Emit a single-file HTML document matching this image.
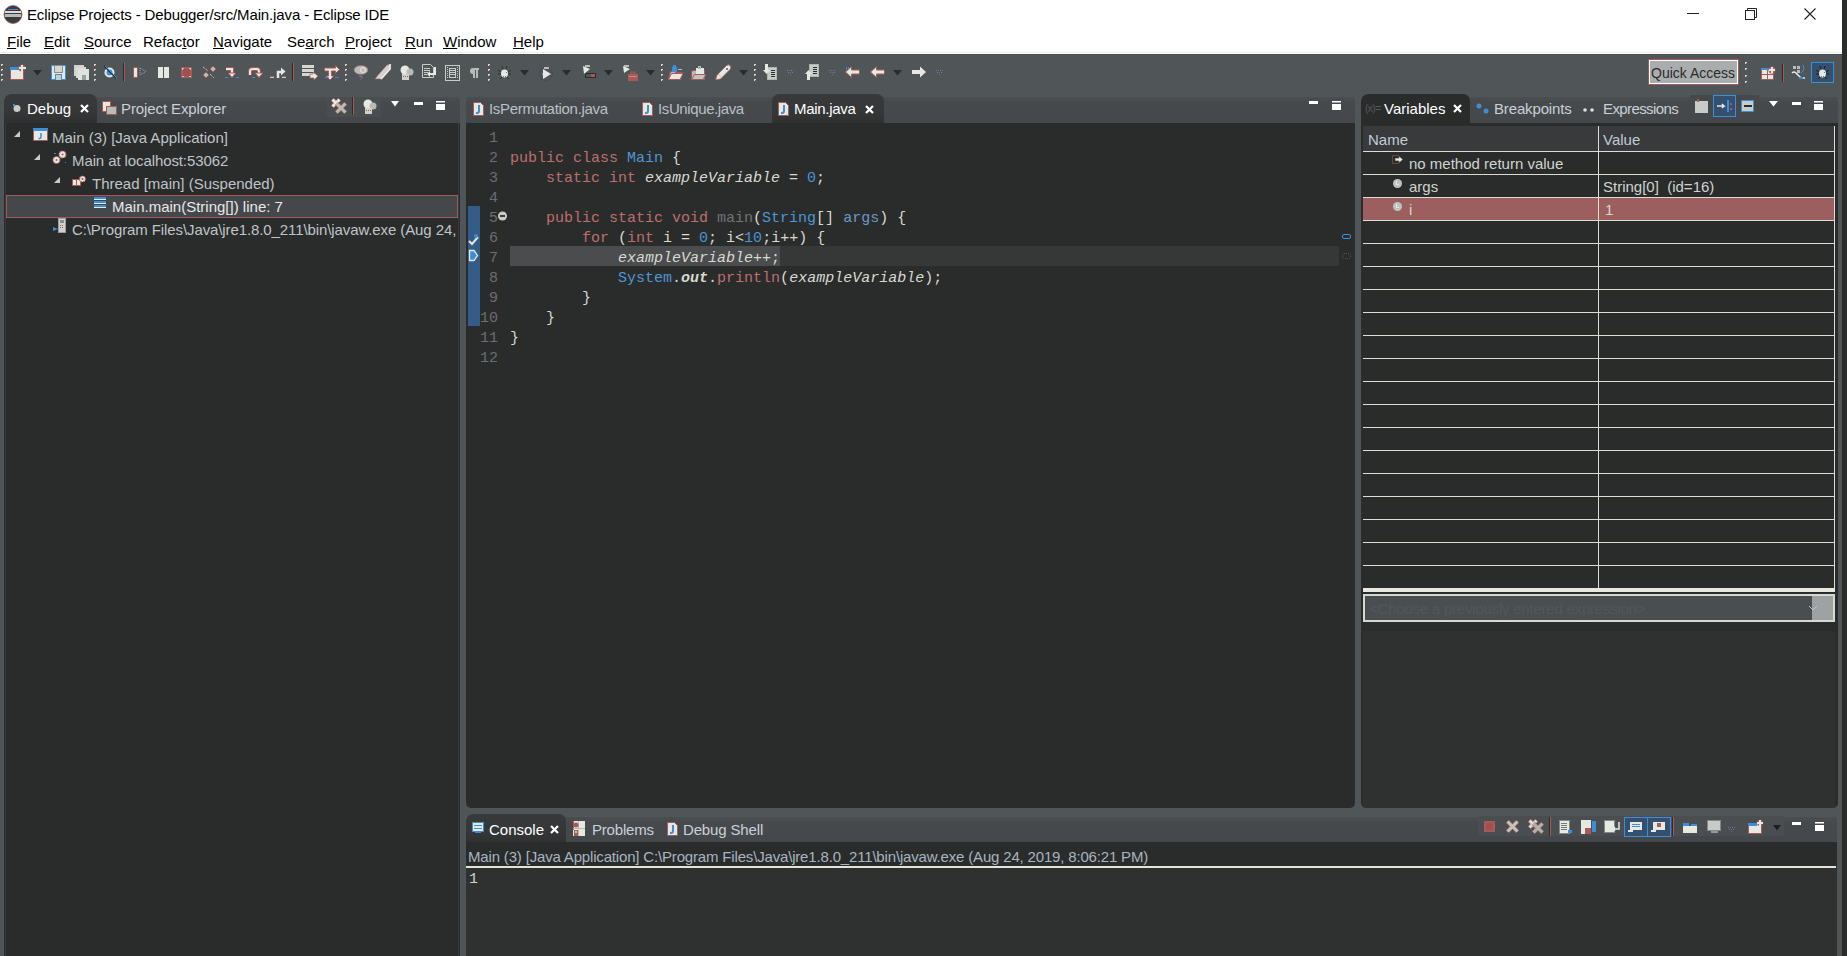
<!DOCTYPE html>
<html><head><meta charset="utf-8">
<style>
*{box-sizing:border-box}
html,body{margin:0;padding:0}
body{width:1847px;height:956px;position:relative;overflow:hidden;background:#2a2c2c;font-family:"Liberation Sans",sans-serif}
.a{position:absolute}
.t{position:absolute;white-space:pre;font-family:"Liberation Sans",sans-serif;font-size:15px;line-height:17px}
.m{position:absolute;white-space:pre;font-family:"Liberation Mono",monospace;font-size:15px;line-height:20px}
.u{text-decoration:underline;text-underline-offset:1px}
.stack{position:absolute;background:transparent;border-radius:7px 7px 0 0;overflow:hidden}
.tabbar{position:absolute;left:0;top:3px;right:0;height:26px;background:linear-gradient(#4b4e51 0,#474a4d 20%,#46494c 60%,#45484b 100%)}
.seltab{position:absolute;top:0;height:29px;border-radius:7px 7px 0 0;background:linear-gradient(#37393a,#353738 55%,#2f3131)}
.tree{color:#bfc4c8}
.kw{color:#be6e6e}
.cl{color:#4d97d5}
.nu{color:#4d92d0}
.it{font-style:italic}
svg{position:absolute;left:0;top:0}
</style></head><body>
<div class="a" style="left:0;top:0;width:1842px;height:956px;background:#505557"></div>
<div class="a" style="left:0;top:0;width:1842px;height:54px;background:#fff"></div>
<div class="a" style="left:0;top:52px;width:1842px;height:1px;background:#ebebe7"></div>
<div class="a" style="left:0;top:54px;width:1842px;height:1px;background:#484c4e"></div>

<div class="t" style="left:27px;top:6px;color:#000;letter-spacing:-0.13px">Eclipse Projects - Debugger/src/Main.java - Eclipse IDE</div>
<div class="t" style="left:7px;top:33px;color:#000"><span class="u">F</span>ile</div>
<div class="t" style="left:44px;top:33px;color:#000"><span class="u">E</span>dit</div>
<div class="t" style="left:84px;top:33px;color:#000"><span class="u">S</span>ource</div>
<div class="t" style="left:143px;top:33px;color:#000">Refac<span class="u">t</span>or</div>
<div class="t" style="left:213px;top:33px;color:#000"><span class="u">N</span>avigate</div>
<div class="t" style="left:287px;top:33px;color:#000">Se<span class="u">a</span>rch</div>
<div class="t" style="left:345px;top:33px;color:#000"><span class="u">P</span>roject</div>
<div class="t" style="left:405px;top:33px;color:#000"><span class="u">R</span>un</div>
<div class="t" style="left:443px;top:33px;color:#000"><span class="u">W</span>indow</div>
<div class="t" style="left:513px;top:33px;color:#000"><span class="u">H</span>elp</div>
<div class="a" style="left:1648px;top:59px;width:91px;height:26px;border:1px solid #a05a5a;background:#fff;padding:1px"><div style="width:100%;height:100%;background:#aaadae"></div></div>
<div class="t" style="left:1651px;top:65px;color:#2a2a2a;font-size:14px">Quick Access</div>
<div class="stack" style="left:4px;top:94px;width:456px;height:862px">
<div class="tabbar"></div><div class="seltab" style="left:0;width:93px"></div>
<div class="a" style="left:323px;top:3px;width:54px;height:20px;background:#4a4e50"></div>
<div class="a" style="left:0;top:29px;width:456px;height:833px;background:#2a2c2c"></div>
<div class="t" style="left:23px;top:6px;color:#fff">Debug</div>
<div class="t" style="left:117px;top:6px;color:#c8d0d8;letter-spacing:-0.1px">Project Explorer</div>
<div class="a" style="left:1px;top:29px;width:1px;height:833px;background:#383a3c"></div><div class="a" style="left:454px;top:29px;width:1px;height:833px;background:#383a3c"></div>
<div class="a" style="left:2px;top:101px;width:452px;height:23px;background:#45484b;border:1px solid #a05a5a"></div>
<div class="t tree" style="left:48px;top:35px">Main (3) [Java Application]</div>
<div class="t tree" style="left:68px;top:58px;letter-spacing:-0.1px">Main at localhost:53062</div>
<div class="t tree" style="left:88px;top:81px">Thread [main] (Suspended)</div>
<div class="t" style="left:108px;top:104px;color:#e8e8e8">Main.main(String[]) line: 7</div>
<div class="t tree" style="left:68px;top:127px;letter-spacing:-0.1px">C:\Program Files\Java\jre1.8.0_211\bin\javaw.exe (Aug 24, 2019, 8:06:21 PM)</div>
</div>
<div class="stack" style="left:466px;top:94px;width:889px;height:714px;border-radius:7px 7px 5px 5px">
<div class="tabbar"></div><div class="seltab" style="left:306px;width:112px"></div>
<div class="a" style="left:0;top:29px;width:889px;height:685px;background:#2a2c2c"></div>
<div class="t" style="left:23px;top:6px;color:#b8c0c8;letter-spacing:-0.3px">IsPermutation.java</div>
<div class="t" style="left:192px;top:6px;color:#b8c0c8;letter-spacing:-0.39px">IsUnique.java</div>
<div class="t" style="left:328px;top:6px;color:#fff;letter-spacing:-0.3px">Main.java</div>
<div class="a" style="left:2px;top:112px;width:12px;height:120px;background:#335d88"></div>
<div class="a" style="left:314px;top:152px;width:559px;height:20px;background:#363838"></div>
<div class="a" style="left:44px;top:152px;width:270px;height:20px;background:#4a4c4e"></div>
</div>
<div class="m" style="left:462px;top:129px;width:36px;text-align:right;color:#6a6e71">1
2
3
4
5
6
7
8
9
10
11
12</div>
<div class="m" style="left:510px;top:129px;color:#d9d9d0">
<span class="kw">public class</span> <span class="cl">Main</span> {
    <span class="kw">static int</span> <span class="it">exampleVariable</span> = <span class="nu">0</span>;

    <span class="kw">public static void</span> <span style="color:#6e7274">main</span>(<span class="cl">String</span>[] <span style="color:#6c98c8">args</span>) {
        <span class="kw">for</span> (<span class="kw">int</span> i = <span class="nu">0</span>; i&lt;<span class="nu">10</span>;i++) {
            <span class="it">exampleVariable</span>++;
            <span class="cl">System</span>.<b><i>out</i></b>.<span class="kw">println</span>(<span class="it">exampleVariable</span>);
        }
    }
}
</div>
<div class="stack" style="left:1361px;top:94px;width:477px;height:714px;border-radius:7px 7px 5px 5px">
<div class="tabbar"></div><div class="seltab" style="left:0;width:109px;background:#2a2c2c"></div>
<div class="a" style="left:329px;top:1px;width:69px;height:22px;background:#45494b"></div>
<div class="a" style="left:352px;top:1px;width:23px;height:22px;background:#34506e;border:1px solid #3d8ed8"></div>
<div class="a" style="left:0;top:29px;width:477px;height:685px;background:#2a2c2c"></div>
<div class="t" style="left:23px;top:6px;color:#fff">Variables</div>
<div class="t" style="left:133px;top:6px;color:#c8d0d8;letter-spacing:-0.15px">Breakpoints</div>
<div class="t" style="left:242px;top:6px;color:#c8d0d8;letter-spacing:-0.6px">Expressions</div>
<div class="a" style="left:2px;top:32px;width:472px;height:25px;background:#383a3b"></div>
<div class="t" style="left:7px;top:37px;color:#c0ccd8">Name</div>
<div class="t" style="left:242px;top:37px;color:#c0ccd8">Value</div>
<div class="a" style="left:2px;top:104px;width:472px;height:23px;background:#9c5e5e"></div>
<div class="a" style="left:2px;top:57px;width:472px;height:1px;background:#dcdcd4"></div>
<div class="a" style="left:2px;top:80px;width:472px;height:1px;background:#dcdcd4"></div>
<div class="a" style="left:2px;top:103px;width:472px;height:1px;background:#dcdcd4"></div>
<div class="a" style="left:2px;top:126px;width:472px;height:1px;background:#dcdcd4"></div>
<div class="a" style="left:2px;top:149px;width:472px;height:1px;background:#dcdcd4"></div>
<div class="a" style="left:2px;top:172px;width:472px;height:1px;background:#dcdcd4"></div>
<div class="a" style="left:2px;top:195px;width:472px;height:1px;background:#dcdcd4"></div>
<div class="a" style="left:2px;top:218px;width:472px;height:1px;background:#dcdcd4"></div>
<div class="a" style="left:2px;top:241px;width:472px;height:1px;background:#dcdcd4"></div>
<div class="a" style="left:2px;top:264px;width:472px;height:1px;background:#dcdcd4"></div>
<div class="a" style="left:2px;top:287px;width:472px;height:1px;background:#dcdcd4"></div>
<div class="a" style="left:2px;top:310px;width:472px;height:1px;background:#dcdcd4"></div>
<div class="a" style="left:2px;top:333px;width:472px;height:1px;background:#dcdcd4"></div>
<div class="a" style="left:2px;top:356px;width:472px;height:1px;background:#dcdcd4"></div>
<div class="a" style="left:2px;top:379px;width:472px;height:1px;background:#dcdcd4"></div>
<div class="a" style="left:2px;top:402px;width:472px;height:1px;background:#dcdcd4"></div>
<div class="a" style="left:2px;top:425px;width:472px;height:1px;background:#dcdcd4"></div>
<div class="a" style="left:2px;top:448px;width:472px;height:1px;background:#dcdcd4"></div>
<div class="a" style="left:2px;top:471px;width:472px;height:1px;background:#dcdcd4"></div>
<div class="a" style="left:237px;top:32px;width:1px;height:462px;background:#dcdcd4"></div>
<div class="a" style="left:473px;top:32px;width:1px;height:462px;background:#dcdcd4"></div>
<div class="a" style="left:2px;top:494px;width:472px;height:4px;background:#e8e8e0"></div>
<div class="t" style="left:48px;top:61px;color:#d0d4d0">no method return value</div>
<div class="t" style="left:48px;top:84px;color:#d0d4d0">args</div>
<div class="t" style="left:242px;top:84px;color:#d0d4d0">String[0]  (id=16)</div>
<div class="t" style="left:48px;top:107px;color:#d8d8d0">i</div>
<div class="t" style="left:244px;top:107px;color:#d8d8d0">1</div>
<div class="a" style="left:2px;top:500px;width:472px;height:28px;background:#4b4e50;border:2px solid #d8d8d0"></div>
<div class="a" style="left:451px;top:502px;width:21px;height:24px;background:#9ea2a2"></div>
<div class="t" style="left:8px;top:506px;color:#53575a;letter-spacing:-0.22px">&lt;Choose a previously entered expression&gt;</div>
<div class="a" style="left:2px;top:537px;width:472px;height:177px;background:#2f3131"></div>
</div>
<div class="stack" style="left:466px;top:814px;width:1371px;height:142px">
<div class="tabbar"></div><div class="seltab" style="left:0;width:100px"></div>
<div class="a" style="left:1012px;top:2px;width:306px;height:20px;background:#4a4e50"></div>
<div class="a" style="left:0;top:28px;width:1371px;height:114px;background:#2a2c2c"></div>
<div class="a" style="left:0;top:53px;width:1371px;height:89px;background:#2f3131"></div>
<div class="a" style="left:0;top:52px;width:1370px;height:2px;background:#e4e4dc"></div>
<div class="t" style="left:23px;top:7px;color:#fff">Console</div>
<div class="t" style="left:126px;top:7px;color:#c8d0d8;letter-spacing:-0.2px">Problems</div>
<div class="t" style="left:217px;top:7px;color:#c8d0d8;letter-spacing:-0.15px">Debug Shell</div>
<div class="t" style="left:2px;top:34px;color:#a8b4c0;letter-spacing:-0.17px">Main (3) [Java Application] C:\Program Files\Java\jre1.8.0_211\bin\javaw.exe (Aug 24, 2019, 8:06:21 PM)</div>
<div class="m" style="left:4px;top:858px;color:#d0d4d0;position:absolute"></div>
</div>
<div class="m" style="left:469px;top:870px;color:#d0d4d0">1</div>
<svg width="1847" height="956" viewBox="0 0 1847 956"><circle cx="13" cy="14.5" r="9" fill="#3a3c3e" stroke="#a06060" stroke-width="0.8"/><rect x="5" y="11" width="16" height="2" fill="#d8dcd8" /><rect x="5" y="14" width="16" height="3" fill="#b8bcb8" /><rect x="8" y="9" width="10" height="1" fill="#3d8ed8" /><rect x="1687" y="13" width="12" height="1" fill="#222" /><rect x="1745.5" y="10.5" width="9" height="9" fill="none" stroke="#222"/><path d="M1747.5 10.5 v-2 h9 v9 h-2" fill="none" stroke="#222"/><path d="M1804.5 8.5 L1815.5 19.5 M1815.5 8.5 L1804.5 19.5" stroke="#222" stroke-width="1.1"/><rect x="1" y="64" width="2" height="2" fill="#d8d8d0" /><rect x="2" y="65" width="1" height="1" fill="#a85a58" /><rect x="1" y="69" width="2" height="2" fill="#d8d8d0" /><rect x="2" y="70" width="1" height="1" fill="#a85a58" /><rect x="1" y="74" width="2" height="2" fill="#d8d8d0" /><rect x="2" y="75" width="1" height="1" fill="#a85a58" /><rect x="1" y="79" width="2" height="2" fill="#d8d8d0" /><rect x="2" y="80" width="1" height="1" fill="#a85a58" /><rect x="10.5" y="67.5" width="13" height="12" fill="#e6e8e2" stroke="#a85a58"/><rect x="10" y="67" width="9" height="3" fill="#3d8ed8" /><circle cx="22" cy="68" r="3.5" fill="#a85a58"/><rect x="21" y="65" width="2" height="7" fill="#e6e8e2" /><rect x="19" y="67" width="7" height="2" fill="#e6e8e2" /><polygon points="33,70 42,70 37.5,75.5" fill="#2a2c2c"/><rect x="51.5" y="65.5" width="14" height="14" fill="#e6e8e2" stroke="#3d8ed8"/><rect x="54.5" y="65.5" width="8" height="7" fill="#d4d6d2" stroke="#8a8e8e"/><rect x="55" y="74" width="7" height="6" fill="#3d8ed8" /><rect x="56" y="75" width="5" height="5" fill="#c8ccc8" /><rect x="74" y="65" width="10" height="11" fill="#d0d2ce" /><rect x="76" y="67" width="10" height="11" fill="#d8dad6" /><rect x="78" y="69" width="11" height="11" fill="#e0e2de" /><rect x="82" y="75" width="4" height="5" fill="#9a9e9e" /><rect x="94" y="64" width="2" height="2" fill="#d8d8d0" /><rect x="95" y="65" width="1" height="1" fill="#a85a58" /><rect x="94" y="69" width="2" height="2" fill="#d8d8d0" /><rect x="95" y="70" width="1" height="1" fill="#a85a58" /><rect x="94" y="74" width="2" height="2" fill="#d8d8d0" /><rect x="95" y="75" width="1" height="1" fill="#a85a58" /><rect x="94" y="79" width="2" height="2" fill="#d8d8d0" /><rect x="95" y="80" width="1" height="1" fill="#a85a58" /><circle cx="109.5" cy="72.5" r="5" fill="#e6e8e2"/><circle cx="109.5" cy="72.5" r="3" fill="#3d8ed8"/><line x1="104" y1="66" x2="116" y2="78" stroke="#2a2c2c" stroke-width="1.2"/><line x1="105" y1="66" x2="117" y2="78" stroke="#3d8ed8" stroke-width="1"/><rect x="123" y="63" width="1" height="18" fill="#2a2c2c" /><rect x="124" y="63" width="1" height="18" fill="#a85a58" /><rect x="133.5" y="67.5" width="4" height="10" fill="#e6e8e2" stroke="#a85a58"/><polygon points="140,68 146,71.5 140,75" fill="none" stroke="#9aa8b8" stroke-dasharray="1,1"/><rect x="158" y="67" width="5" height="11" fill="#e6e8e2" /><rect x="164" y="67" width="5" height="11" fill="#e6e8e2" /><rect x="181" y="67" width="11" height="11" fill="#a85a58" /><rect x="183" y="69" width="7" height="7" fill="#a05050" /><rect x="182" y="68" width="2" height="1" fill="#b8c8c0" /><rect x="182" y="68" width="1" height="2" fill="#b8c8c0" /><rect x="189" y="68" width="2" height="1" fill="#b8c8c0" /><rect x="190" y="68" width="1" height="2" fill="#b8c8c0" /><rect x="182" y="76" width="2" height="1" fill="#b8c8c0" /><rect x="189" y="76" width="2" height="1" fill="#b8c8c0" /><polygon points="206,72 209,75 206,78 203,75" fill="#b8bcb8" stroke="#a85a58"/><polygon points="213,66 216,69 213,72 210,69" fill="#b8bcb8" stroke="#a85a58"/><path d="M203 67 L208 71 M210 74 L214 78" stroke="#e6e8e2" stroke-dasharray="1,1"/><path d="M226 69 H232 V73" stroke="#a85a58" stroke-width="4" fill="none"/><path d="M226 69 H232 V73" stroke="#e6e8e2" stroke-width="2" fill="none"/><polygon points="228,73 236,73 232,77.5" fill="#e6e8e2" stroke="#a85a58" stroke-width="1"/><rect x="225" y="77" width="3" height="1" fill="#3d8ed8" /><rect x="236" y="77" width="3" height="1" fill="#3d8ed8" /><path d="M250 75 V71 Q250 69 253 69 H257 Q259 69 259 72 V73" stroke="#a85a58" stroke-width="4" fill="none"/><path d="M250 75 V71 Q250 69 253 69 H257 Q259 69 259 72 V73" stroke="#e6e8e2" stroke-width="2" fill="none"/><polygon points="255,73 263,73 259,77.5" fill="#e6e8e2" stroke="#a85a58" stroke-width="1"/><rect x="252" y="77" width="3" height="1" fill="#3d8ed8" /><path d="M278 78 V72 H281" stroke="#e6e8e2" stroke-width="2.5" fill="none"/><polygon points="281,67.5 285.5,71.5 281,75.5" fill="#e6e8e2"/><rect x="270" y="76" width="4" height="2" fill="#c8ccc8" /><rect x="282" y="76" width="4" height="2" fill="#c8ccc8" /><rect x="270" y="76" width="4" height="1" fill="#a85a58" /><rect x="282" y="76" width="4" height="1" fill="#a85a58" /><rect x="292" y="63" width="1" height="18" fill="#2a2c2c" /><rect x="293" y="63" width="1" height="18" fill="#a85a58" /><rect x="302" y="65" width="12" height="3" fill="#d4d6d2" /><rect x="302" y="69" width="12" height="3" fill="#d4d6d2" /><rect x="302" y="73" width="12" height="3" fill="#d4d6d2" /><path d="M310 74 h3 v-2 l5 4 l-4 4 v-2 h-4 z" fill="#e6e8e2" stroke="#a85a58" stroke-width="0.7"/><path d="M324.5 68 h11 v-2.5 l4 4 l-4 4 v-2.5 h-4 v5 h2.5 l-4 4 l-4 -4 h2.5 v-5 h-4 z" fill="#e6e8e2" stroke="#a85a58"/><path d="M325 78 q2 -2 4 0 M335 78 q2 -2 4 0" stroke="#3d8ed8" fill="none"/><rect x="345" y="64" width="2" height="2" fill="#d8d8d0" /><rect x="346" y="65" width="1" height="1" fill="#a85a58" /><rect x="345" y="69" width="2" height="2" fill="#d8d8d0" /><rect x="346" y="70" width="1" height="1" fill="#a85a58" /><rect x="345" y="74" width="2" height="2" fill="#d8d8d0" /><rect x="346" y="75" width="1" height="1" fill="#a85a58" /><rect x="345" y="79" width="2" height="2" fill="#d8d8d0" /><rect x="346" y="80" width="1" height="1" fill="#a85a58" /><ellipse cx="361" cy="70" rx="7" ry="4.5" fill="#b8bcb8" stroke="#a85a58" stroke-width="0.6"/><circle cx="363" cy="70" r="2.5" fill="none" stroke="#e6e8e2"/><path d="M359 74 l3 4 l-2 2" stroke="#a85a58" fill="none"/><path d="M359 76 l4 1" stroke="#3d8ed8"/><path d="M375 79 h7 l9 -10 v-5 l-4 1 l-9 10 z" fill="#d0d4d0" stroke="#a85a58" stroke-width="0.6"/><path d="M381 79 l9 -10 v-5" fill="none" stroke="#e8eae6" stroke-width="1.5"/><circle cx="405" cy="70" r="4.5" fill="#e6e8e2"/><circle cx="410" cy="72" r="3.5" fill="#b8bcb8"/><rect x="402" y="74" width="7" height="6" fill="#d0d2ce" /><rect x="403" y="76" width="1" height="1" fill="#a85a58" /><rect x="405" y="76" width="1" height="1" fill="#a85a58" /><rect x="407" y="76" width="1" height="1" fill="#a85a58" /><path d="M422.5 64.5 h8 l3 3 v10 h-11 z" fill="none" stroke="#c8ccc8"/><rect x="424" y="68" width="6" height="1" fill="#c8ccc8" /><rect x="424" y="70" width="6" height="1" fill="#c8ccc8" /><rect x="424" y="72" width="4" height="1" fill="#c8ccc8" /><rect x="424" y="74" width="3" height="1" fill="#c8ccc8" /><path d="M436 67 v8 h-6 v2 l-3 -3 l3 -3 v2 h4 v-6 z" fill="#e6e8e2"/><rect x="445.5" y="65.5" width="14" height="15" fill="none" stroke="#c8ccc8"/><rect x="449.5" y="68.5" width="6" height="9" fill="none" stroke="#c8ccc8"/><rect x="450" y="70" width="5" height="1" fill="#c8ccc8" /><rect x="450" y="72" width="5" height="1" fill="#c8ccc8" /><rect x="450" y="74" width="5" height="1" fill="#c8ccc8" /><rect x="447" y="67" width="1" height="1" fill="#c8ccc8" /><rect x="457" y="67" width="1" height="1" fill="#c8ccc8" /><rect x="447" y="69" width="1" height="1" fill="#c8ccc8" /><rect x="457" y="69" width="1" height="1" fill="#c8ccc8" /><rect x="447" y="71" width="1" height="1" fill="#c8ccc8" /><rect x="457" y="71" width="1" height="1" fill="#c8ccc8" /><rect x="447" y="73" width="1" height="1" fill="#c8ccc8" /><rect x="457" y="73" width="1" height="1" fill="#c8ccc8" /><rect x="447" y="75" width="1" height="1" fill="#c8ccc8" /><rect x="457" y="75" width="1" height="1" fill="#c8ccc8" /><rect x="447" y="77" width="1" height="1" fill="#c8ccc8" /><rect x="457" y="77" width="1" height="1" fill="#c8ccc8" /><path d="M473 68 h6 v2 h-1 v8 h-2 v-8 h-1 v8 h-2 v-4 q-3 0 -3 -3 q0 -3 3 -3 z" fill="#b8bcb8"/><rect x="488" y="64" width="2" height="2" fill="#d8d8d0" /><rect x="489" y="65" width="1" height="1" fill="#a85a58" /><rect x="488" y="69" width="2" height="2" fill="#d8d8d0" /><rect x="489" y="70" width="1" height="1" fill="#a85a58" /><rect x="488" y="74" width="2" height="2" fill="#d8d8d0" /><rect x="489" y="75" width="1" height="1" fill="#a85a58" /><rect x="488" y="79" width="2" height="2" fill="#d8d8d0" /><rect x="489" y="80" width="1" height="1" fill="#a85a58" /><path d="M498 70 l3 2 M511 70 l-3 2 M498 74 l3 0 M511 74 l-3 0 M500 79 l2 -2 M509 79 l-2 -2 M502 66 l1 3 M507 66 l-1 3" stroke="#2a2c2e" stroke-width="0.9"/><ellipse cx="504.5" cy="73.5" rx="3.5" ry="4" fill="#e6e8e2"/><rect x="506" y="72" width="1" height="1" fill="#3d8ed8" /><rect x="503" y="76" width="1" height="1" fill="#3d8ed8" /><rect x="505" y="76" width="1" height="1" fill="#a85a58" /><polygon points="520,70 529,70 524.5,75.5" fill="#2a2c2c"/><circle cx="546" cy="74" r="6.5" fill="none" stroke="#3a3c3e" stroke-dasharray="1,1.5"/><polygon points="543,69 551,74 543,79" fill="#e6e8e2"/><rect x="542" y="73" width="1" height="2" fill="#3d8ed8" /><rect x="544" y="67" width="5" height="2" fill="#b8bcb8" /><polygon points="562,70 571,70 566.5,75.5" fill="#2a2c2c"/><polygon points="583,66 590,69 584,74" fill="#e6e8e2"/><rect x="585" y="65" width="5" height="2" fill="#b8bcb8" /><rect x="585.5" y="73.5" width="10" height="4" fill="none" stroke="#2a2c2c"/><rect x="591" y="74" width="4" height="3" fill="#a85a58" /><polygon points="604,70 613,70 608.5,75.5" fill="#2a2c2c"/><polygon points="623,66 630,69 624,73" fill="#e6e8e2"/><rect x="624" y="65" width="5" height="2" fill="#b8bcb8" /><rect x="628" y="74" width="10" height="7" fill="#a85a58" /><rect x="631" y="72" width="4" height="2" fill="none" stroke="#a85a58"/><rect x="629" y="76" width="8" height="1" fill="#c88a88" /><polygon points="646,70 655,70 650.5,75.5" fill="#2a2c2c"/><rect x="661" y="64" width="2" height="2" fill="#d8d8d0" /><rect x="662" y="65" width="1" height="1" fill="#a85a58" /><rect x="661" y="69" width="2" height="2" fill="#d8d8d0" /><rect x="662" y="70" width="1" height="1" fill="#a85a58" /><rect x="661" y="74" width="2" height="2" fill="#d8d8d0" /><rect x="662" y="75" width="1" height="1" fill="#a85a58" /><rect x="661" y="79" width="2" height="2" fill="#d8d8d0" /><rect x="662" y="80" width="1" height="1" fill="#a85a58" /><path d="M668.5 79.5 l2 -8 h4 l1 1 h7 l-2 7 z" fill="#b8bcb8" stroke="#a85a58"/><path d="M668.5 79.5 l3 -6 h11.5 l-3 6 z" fill="#e6e8e2" stroke="#a85a58"/><rect x="672" y="67" width="5" height="5" fill="#3d8ed8" /><rect x="673" y="65" width="3" height="2" fill="#3d8ed8" /><rect x="678" y="69" width="4" height="1" fill="#b8bcb8" /><path d="M691.5 79.5 v-8 l2 -1 h11 v9 z" fill="#b8bcb8" stroke="#a85a58"/><rect x="696" y="68" width="8" height="6" fill="#e6e8e2" /><rect x="698" y="66" width="3" height="3" fill="#b8bcb8" /><rect x="699" y="67" width="1" height="1" fill="#3d8ed8" /><path d="M691.5 79.5 l3 -5 h11.5 l-3 5 z" fill="#c0c4c0" stroke="#a85a58"/><path d="M715.5 80 l1.5 -5 l9.5 -9.5 q2.5 -1.5 4 0.5 q1 2 -0.5 3.5 l-9.5 9.5 z" fill="#e6e8e2" stroke="#a85a58" stroke-width="0.9"/><path d="M718 74 l4 4" stroke="#b8bcb8" stroke-width="1"/><rect x="726" y="68" width="2" height="2" fill="#3d8ed8" /><polygon points="739,70 748,70 743.5,75.5" fill="#2a2c2c"/><rect x="754" y="64" width="2" height="2" fill="#d8d8d0" /><rect x="755" y="65" width="1" height="1" fill="#a85a58" /><rect x="754" y="69" width="2" height="2" fill="#d8d8d0" /><rect x="755" y="70" width="1" height="1" fill="#a85a58" /><rect x="754" y="74" width="2" height="2" fill="#d8d8d0" /><rect x="755" y="75" width="1" height="1" fill="#a85a58" /><rect x="754" y="79" width="2" height="2" fill="#d8d8d0" /><rect x="755" y="80" width="1" height="1" fill="#a85a58" /><rect x="767.5" y="67.5" width="9" height="12" fill="#c8ccc8" stroke="#b0b4b0"/><rect x="771" y="70" width="4" height="1" fill="#2a2c2c" /><rect x="771" y="72" width="4" height="1" fill="#2a2c2c" /><rect x="771" y="74" width="4" height="1" fill="#2a2c2c" /><rect x="771" y="76" width="4" height="1" fill="#2a2c2c" /><path d="M765 64 h3 v6 h2 l-3.5 4 l-3.5 -4 h2 z" fill="#e6e8e2"/><rect x="787" y="70" width="1" height="1" fill="#3d8ed8" /><rect x="789" y="70" width="1" height="1" fill="#a85a58" /><rect x="791" y="70" width="1" height="1" fill="#3d8ed8" /><rect x="793" y="70" width="1" height="1" fill="#a85a58" /><rect x="788" y="72" width="1" height="1" fill="#3d8ed8" /><rect x="790" y="72" width="1" height="1" fill="#a85a58" /><rect x="792" y="72" width="1" height="1" fill="#3d8ed8" /><rect x="790" y="74" width="1" height="1" fill="#a85a58" /><rect x="809.5" y="64.5" width="9" height="12" fill="#c8ccc8" stroke="#b0b4b0"/><rect x="813" y="67" width="4" height="1" fill="#2a2c2c" /><rect x="813" y="69" width="4" height="1" fill="#2a2c2c" /><rect x="813" y="71" width="4" height="1" fill="#2a2c2c" /><rect x="813" y="73" width="4" height="1" fill="#2a2c2c" /><path d="M807 80 h3 v-6 h2 l-3.5 -4 l-3.5 4 h2 z" fill="#e6e8e2"/><rect x="829" y="70" width="1" height="1" fill="#3d8ed8" /><rect x="831" y="70" width="1" height="1" fill="#a85a58" /><rect x="833" y="70" width="1" height="1" fill="#3d8ed8" /><rect x="835" y="70" width="1" height="1" fill="#a85a58" /><rect x="830" y="72" width="1" height="1" fill="#3d8ed8" /><rect x="832" y="72" width="1" height="1" fill="#a85a58" /><rect x="834" y="72" width="1" height="1" fill="#3d8ed8" /><rect x="832" y="74" width="1" height="1" fill="#a85a58" /><path d="M845.5 72 l6 -5.5 v3.5 h8 v4 h-8 v3.5 z" fill="#e6e8e2" stroke="#a85a58"/><rect x="846" y="67" width="1" height="3" fill="#3d8ed8" /><rect x="848" y="67" width="1" height="3" fill="#3d8ed8" /><path d="M870.5 72 l6 -5.5 v3.5 h8 v4 h-8 v3.5 z" fill="#e6e8e2" stroke="#a85a58"/><polygon points="893,70 902,70 897.5,75.5" fill="#2a2c2c"/><path d="M926 72 l-6 -5.5 v3.5 h-8 v4 h8 v3.5 z" fill="#e6e8e2"/><rect x="936" y="70" width="1" height="1" fill="#3d8ed8" /><rect x="938" y="70" width="1" height="1" fill="#a85a58" /><rect x="940" y="70" width="1" height="1" fill="#3d8ed8" /><rect x="942" y="70" width="1" height="1" fill="#a85a58" /><rect x="937" y="72" width="1" height="1" fill="#3d8ed8" /><rect x="939" y="72" width="1" height="1" fill="#a85a58" /><rect x="941" y="72" width="1" height="1" fill="#3d8ed8" /><rect x="939" y="74" width="1" height="1" fill="#a85a58" /><rect x="1745" y="62" width="2" height="2" fill="#d8d8d0" /><rect x="1746" y="63" width="1" height="1" fill="#a85a58" /><rect x="1745" y="68" width="2" height="2" fill="#d8d8d0" /><rect x="1746" y="69" width="1" height="1" fill="#a85a58" /><rect x="1745" y="75" width="2" height="2" fill="#d8d8d0" /><rect x="1746" y="76" width="1" height="1" fill="#a85a58" /><rect x="1745" y="81" width="2" height="2" fill="#d8d8d0" /><rect x="1746" y="82" width="1" height="1" fill="#a85a58" /><rect x="1761.5" y="68.5" width="12" height="11" fill="#e6e8e2" stroke="#a85a58"/><rect x="1767" y="68" width="1" height="12" fill="#a85a58" /><rect x="1761" y="74" width="13" height="1" fill="#a85a58" /><rect x="1761" y="68" width="9" height="2" fill="#3d8ed8" /><circle cx="1772" cy="70" r="3.5" fill="#a85a58"/><rect x="1771" y="67" width="2" height="6" fill="#e6e8e2" /><rect x="1769" y="69" width="6" height="2" fill="#e6e8e2" /><rect x="1782" y="64" width="1" height="18" fill="#2a2c2c" /><rect x="1783" y="64" width="1" height="18" fill="#a85a58" /><rect x="1793" y="66" width="3" height="3" fill="#b8bcb8" /><rect x="1797" y="66" width="3" height="3" fill="#b8bcb8" /><rect x="1797" y="70" width="3" height="3" fill="#b8bcb8" /><path d="M1792 73 q2 -2 4 0 l5 5 h4" stroke="#e6e8e2" fill="none" stroke-width="1.5"/><path d="M1803 65 q2 3 0 6 l-2 2" stroke="#3d8ed8" fill="none"/><rect x="1799" y="77" width="4" height="2" fill="#3d8ed8" /><rect x="1811.5" y="62.5" width="22" height="20" fill="#34506e" stroke="#3d8ed8"/><path d="M1816 70 l3 2 M1829 70 l-3 2 M1816 74 l3 0 M1829 74 l-3 0 M1818 79 l2 -2 M1827 79 l-2 -2 M1820 66 l1 3 M1825 66 l-1 3" stroke="#1a1c1c" stroke-width="0.9"/><ellipse cx="1822.5" cy="73.5" rx="3.5" ry="4" fill="#e6e8e2"/><rect x="1824" y="72" width="1" height="1" fill="#3d8ed8" /><rect x="1821" y="76" width="1" height="1" fill="#3d8ed8" /><rect x="1823" y="76" width="1" height="1" fill="#a85a58" /><circle cx="17" cy="108.5" r="3.5" fill="#c8ccc8"/><rect x="13" y="104" width="2" height="2" fill="#3d8ed8" /><rect x="18" y="111" width="1" height="1" fill="#a85a58" /><path d="M81 105 L88 112 M88 105 L81 112" stroke="#ffffff" stroke-width="2.2"/><rect x="102.5" y="101.5" width="8" height="10" fill="#e6e8e2" stroke="#a85a58"/><rect x="106.5" y="106.5" width="10" height="8" fill="#b8bcb8" stroke="#a85a58"/><path d="M332.5 99.5 L339.5 106.5 M339.5 99.5 L332.5 106.5" stroke="#a85a58" stroke-width="4.2"/><path d="M332.5 99.5 L339.5 106.5 M339.5 99.5 L332.5 106.5" stroke="#e8eae6" stroke-width="3"/><path d="M336.5 103.5 L345.5 112.5 M345.5 103.5 L336.5 112.5" stroke="#a85a58" stroke-width="4.2"/><path d="M336.5 103.5 L345.5 112.5 M345.5 103.5 L336.5 112.5" stroke="#b8bcb8" stroke-width="3"/><rect x="352" y="97" width="1" height="18" fill="#2a2c2c" /><rect x="353" y="97" width="1" height="18" fill="#a85a58" /><circle cx="368" cy="104" r="4.5" fill="#e6e8e2"/><circle cx="373" cy="106" r="3.5" fill="#b8bcb8"/><rect x="365" y="108" width="7" height="6" fill="#d0d2ce" /><rect x="366" y="110" width="1" height="1" fill="#a85a58" /><rect x="368" y="110" width="1" height="1" fill="#a85a58" /><rect x="370" y="110" width="1" height="1" fill="#a85a58" /><polygon points="391,101 399,101 395.0,106.5" fill="#ffffff"/><rect x="414" y="102" width="9" height="3" fill="#ffffff" /><rect x="436" y="101" width="9" height="1.5" fill="#ffffff" /><rect x="436" y="104" width="9" height="6" fill="#ffffff" /><polygon points="20,131 20,137 14,137" fill="#c8ccc8"/><polygon points="40,154 40,160 34,160" fill="#c8ccc8"/><polygon points="60,177 60,183 54,183" fill="#c8ccc8"/><rect x="33.5" y="128.5" width="14" height="12" fill="#e6e8e2" stroke="#a85a58"/><rect x="33" y="128" width="15" height="3" fill="#3d8ed8" /><path d="M41 133 v4 q0 1.5 -1.5 1.5 h-1" stroke="#3d8ed8" stroke-width="1.5" fill="none"/><circle cx="56.5" cy="160" r="3.5" fill="#e6e8e2" stroke="#a85a58" stroke-width="1.2" stroke-dasharray="1.5,1"/><circle cx="56.5" cy="160" r="1" fill="#a85a58"/><circle cx="62.5" cy="154.5" r="3.5" fill="#e6e8e2" stroke="#a85a58" stroke-width="1.2" stroke-dasharray="1.5,1"/><circle cx="62.5" cy="154.5" r="1" fill="#a85a58"/><rect x="54" y="153" width="2" height="1" fill="#3d8ed8" /><rect x="65" y="162" width="1" height="1" fill="#3d8ed8" /><rect x="72.5" y="179.5" width="8" height="6" fill="#e6e8e2" stroke="#a85a58"/><rect x="76" y="180" width="1" height="5" fill="#a85a58" /><circle cx="82.5" cy="179" r="3" fill="#e6e8e2" stroke="#a85a58" stroke-width="1.2" stroke-dasharray="1.5,1"/><circle cx="82.5" cy="179" r="1" fill="#a85a58"/><rect x="94" y="197" width="12" height="2" fill="#3d8ed8" /><rect x="94" y="199" width="12" height="1" fill="#e6e8e2" /><rect x="94" y="201" width="12" height="2" fill="#3d8ed8" /><rect x="94" y="203" width="12" height="1" fill="#e6e8e2" /><rect x="94" y="205" width="12" height="2" fill="#3d8ed8" /><rect x="94" y="207" width="12" height="1" fill="#e6e8e2" /><rect x="58.5" y="218.5" width="7" height="14" fill="#d0d2ce" stroke="#9a9e9e"/><rect x="60" y="220" width="4" height="3" fill="#8a8e8e" /><rect x="60" y="225" width="1" height="1" fill="#a85a58" /><rect x="62" y="225" width="1" height="1" fill="#a85a58" /><rect x="60" y="227" width="1" height="1" fill="#a85a58" /><rect x="62" y="227" width="1" height="1" fill="#a85a58" /><polygon points="53,227 58,229 53,231" fill="#3d8ed8"/><path d="M473.5 102.5 h7 l3 3 v10 h-10 z" fill="#e6e8e2" stroke="#a85a58"/><path d="M479 105 v6 q0 2 -2 2 h-1" stroke="#3d8ed8" stroke-width="2" fill="none"/><path d="M642.5 102.5 h7 l3 3 v10 h-10 z" fill="#e6e8e2" stroke="#a85a58"/><path d="M648 105 v6 q0 2 -2 2 h-1" stroke="#3d8ed8" stroke-width="2" fill="none"/><path d="M778.5 102.5 h7 l3 3 v10 h-10 z" fill="#e6e8e2" stroke="#a85a58"/><path d="M784 105 v6 q0 2 -2 2 h-1" stroke="#3d8ed8" stroke-width="2" fill="none"/><path d="M866 106 L873 113 M873 106 L866 113" stroke="#ffffff" stroke-width="2.2"/><rect x="1309" y="101" width="9" height="3" fill="#ffffff" /><rect x="1332" y="101" width="9" height="1.5" fill="#ffffff" /><rect x="1332" y="104" width="9" height="6" fill="#ffffff" /><circle cx="502.5" cy="216" r="4.5" fill="#c8ccc8"/><rect x="500" y="215" width="5" height="2" fill="#3a3c3c" /><path d="M469 241 l3 3 l6 -7" stroke="#e6e8e2" stroke-width="2" fill="none"/><circle cx="476" cy="236" r="2" fill="#3d8ed8"/><polygon points="469.5,250.5 474,250.5 477.5,255.5 474,260.5 469.5,260.5" fill="#3d8ed8" stroke="#e6e8e2" stroke-width="1.3"/><rect x="1342.5" y="234.5" width="8" height="4" rx="1.5" fill="none" stroke="#3d8ed8"/><rect x="1342.5" y="253.5" width="8" height="5" rx="1.5" fill="none" stroke="#555" stroke-dasharray="1,1"/><text x="1365" y="112" font-family="Liberation Sans" font-size="10" fill="#55595b" letter-spacing="-0.5">(x)=</text><path d="M1454 105 L1461 112 M1461 105 L1454 112" stroke="#ffffff" stroke-width="2.2"/><circle cx="1479" cy="106" r="2.5" fill="#3d8ed8"/><circle cx="1486" cy="111" r="2.5" fill="#3d8ed8"/><circle cx="1585" cy="110" r="1.8" fill="#e0e2de"/><circle cx="1592" cy="110" r="1.8" fill="#e0e2de"/><rect x="1695" y="101" width="13" height="12" fill="#c8ccc8" /><rect x="1697" y="99" width="2" height="3" fill="#a85a58" /><path d="M1717 106 h7 l-2 -2 m2 2 l-2 2" stroke="#e6e8e2" stroke-width="1.5" fill="none"/><rect x="1727" y="100" width="2" height="12" fill="#3d8ed8" /><rect x="1730" y="103" width="2" height="2" fill="#a85a58" /><rect x="1730" y="108" width="2" height="2" fill="#a85a58" /><rect x="1741.5" y="100.5" width="12" height="11" fill="#c8ccc8" stroke="#3d8ed8"/><rect x="1744" y="105" width="8" height="2" fill="#2a2c2c" /><polygon points="1769,101 1778,101 1773.5,106.5" fill="#ffffff"/><rect x="1792" y="102" width="9" height="3" fill="#ffffff" /><rect x="1814" y="101" width="9" height="1.5" fill="#ffffff" /><rect x="1814" y="104" width="9" height="6" fill="#ffffff" /><path d="M1392.5 155.5 h6 v8 h-6 z" fill="none" stroke="#a85a58" stroke-dasharray="1,1"/><path d="M1395 158 h4 v-2 l4 3.5 l-4 3.5 v-2 h-4 z" fill="#e6e8e2" stroke="#333" stroke-width="0.6"/><circle cx="1397.5" cy="183.5" r="4.5" fill="#c0c4c0"/><rect x="1396" y="181" width="1" height="4" fill="#e6e8e2" /><rect x="1396" y="184" width="3" height="1" fill="#e6e8e2" /><circle cx="1397.5" cy="206.5" r="4.5" fill="#c0c4c0"/><rect x="1396" y="204" width="1" height="4" fill="#e6e8e2" /><rect x="1396" y="207" width="3" height="1" fill="#e6e8e2" /><path d="M1809 606 l4 4 l4 -4" stroke="#c0c4c4" fill="none"/><rect x="472.5" y="822.5" width="11" height="9" fill="#e6e8e2" stroke="#3d8ed8"/><rect x="474" y="825" width="8" height="1" fill="#3d8ed8" /><rect x="474" y="828" width="8" height="1" fill="#3d8ed8" /><rect x="475" y="832" width="6" height="1" fill="#3d8ed8" /><path d="M551 826 L558 833 M558 826 L551 833" stroke="#ffffff" stroke-width="2.2"/><rect x="573" y="821" width="12" height="15" fill="#e6e8e2" /><rect x="573" y="821" width="1" height="9" fill="#a85a58" /><rect x="578" y="821" width="1" height="15" fill="#b8bcb8" /><rect x="573" y="828" width="12" height="1" fill="#b8bcb8" /><circle cx="576" cy="825" r="2.5" fill="#a85a58"/><rect x="574" y="830" width="4" height="6" fill="#a85a58" /><rect x="575" y="831" width="2" height="2" fill="#c8ccc8" /><path d="M667.5 822.5 h7 l3 3 v10 h-10 z" fill="#e6e8e2" stroke="#a85a58"/><path d="M673 825 v6 q0 2 -2 2 h-1" stroke="#3d8ed8" stroke-width="2" fill="none"/><rect x="1484" y="821" width="11" height="11" fill="#a85a58" /><rect x="1486" y="823" width="7" height="7" fill="#a05050" /><path d="M1507.5 821.5 L1517.5 831.5 M1517.5 821.5 L1507.5 831.5" stroke="#a85a58" stroke-width="4.2"/><path d="M1507.5 821.5 L1517.5 831.5 M1517.5 821.5 L1507.5 831.5" stroke="#c0c4c0" stroke-width="3"/><path d="M1529.5 820.5 L1536.5 827.5 M1536.5 820.5 L1529.5 827.5" stroke="#a85a58" stroke-width="4.2"/><path d="M1529.5 820.5 L1536.5 827.5 M1536.5 820.5 L1529.5 827.5" stroke="#d8dcd8" stroke-width="3"/><path d="M1533.5 823.5 L1542.5 832.5 M1542.5 823.5 L1533.5 832.5" stroke="#a85a58" stroke-width="4.2"/><path d="M1533.5 823.5 L1542.5 832.5 M1542.5 823.5 L1533.5 832.5" stroke="#b0b4b0" stroke-width="3"/><rect x="1549" y="817" width="1" height="19" fill="#2a2c2c" /><rect x="1550" y="817" width="1" height="19" fill="#a85a58" /><rect x="1559.5" y="820.5" width="10" height="13" fill="#e6e8e2" stroke="#888"/><rect x="1561" y="823" width="6" height="1" fill="#777" /><rect x="1561" y="825" width="6" height="1" fill="#777" /><rect x="1561" y="827" width="6" height="1" fill="#777" /><rect x="1561" y="829" width="6" height="1" fill="#777" /><rect x="1568" y="830" width="4" height="3" fill="#3d8ed8" /><rect x="1581" y="820" width="10" height="14" fill="#e6e8e2" /><rect x="1585" y="828" width="6" height="6" fill="#a85a58" /><rect x="1592" y="821" width="4" height="11" fill="#3d8ed8" /><rect x="1604.5" y="820.5" width="10" height="12" fill="#e6e8e2" stroke="#888"/><path d="M1619 822 v7 h-6 l2 -2 m-2 2 l2 2" stroke="#e6e8e2" stroke-width="1.5" fill="none"/><rect x="1624.5" y="817.5" width="23" height="19" fill="#34506e" stroke="#3d8ed8"/><rect x="1647.5" y="817.5" width="23" height="19" fill="#34506e" stroke="#3d8ed8"/><rect x="1630" y="822" width="12" height="8" fill="#e6e8e2" /><rect x="1632" y="824" width="8" height="1" fill="#3d8ed8" /><rect x="1632" y="826" width="8" height="1" fill="#3d8ed8" /><rect x="1628" y="830" width="5" height="2" fill="#e6e8e2" /><rect x="1653" y="822" width="12" height="8" fill="#e6e8e2" /><rect x="1657" y="823" width="4" height="4" fill="#a85a58" /><rect x="1651" y="830" width="5" height="2" fill="#e6e8e2" /><rect x="1672" y="817" width="1" height="19" fill="#2a2c2c" /><rect x="1673" y="817" width="1" height="19" fill="#a85a58" /><rect x="1683" y="826" width="14" height="7" fill="#e6e8e2" /><rect x="1683" y="823" width="6" height="3" fill="#3d8ed8" /><rect x="1691" y="824" width="6" height="2" fill="#3d8ed8" /><rect x="1707.5" y="820.5" width="13" height="10" fill="#c8ccc8" stroke="#888"/><rect x="1711" y="831" width="7" height="2" fill="#999" /><rect x="1728" y="827" width="1" height="1" fill="#3d8ed8" /><rect x="1730" y="827" width="1" height="1" fill="#a85a58" /><rect x="1732" y="827" width="1" height="1" fill="#3d8ed8" /><rect x="1734" y="827" width="1" height="1" fill="#a85a58" /><rect x="1729" y="829" width="1" height="1" fill="#3d8ed8" /><rect x="1731" y="829" width="1" height="1" fill="#a85a58" /><rect x="1733" y="829" width="1" height="1" fill="#3d8ed8" /><rect x="1731" y="831" width="1" height="1" fill="#a85a58" /><rect x="1748.5" y="823.5" width="13" height="10" fill="#e6e8e2" stroke="#a85a58"/><rect x="1748" y="823" width="9" height="3" fill="#3d8ed8" /><circle cx="1760" cy="823" r="3" fill="#a85a58"/><rect x="1759" y="820" width="2" height="6" fill="#e6e8e2" /><rect x="1757" y="822" width="6" height="2" fill="#e6e8e2" /><polygon points="1773,825 1781,825 1777.0,830.5" fill="#1e2020"/><rect x="1792" y="822" width="9" height="3" fill="#ffffff" /><rect x="1815" y="822" width="9" height="1.5" fill="#ffffff" /><rect x="1815" y="825" width="9" height="6" fill="#ffffff" /></svg>
</body></html>
